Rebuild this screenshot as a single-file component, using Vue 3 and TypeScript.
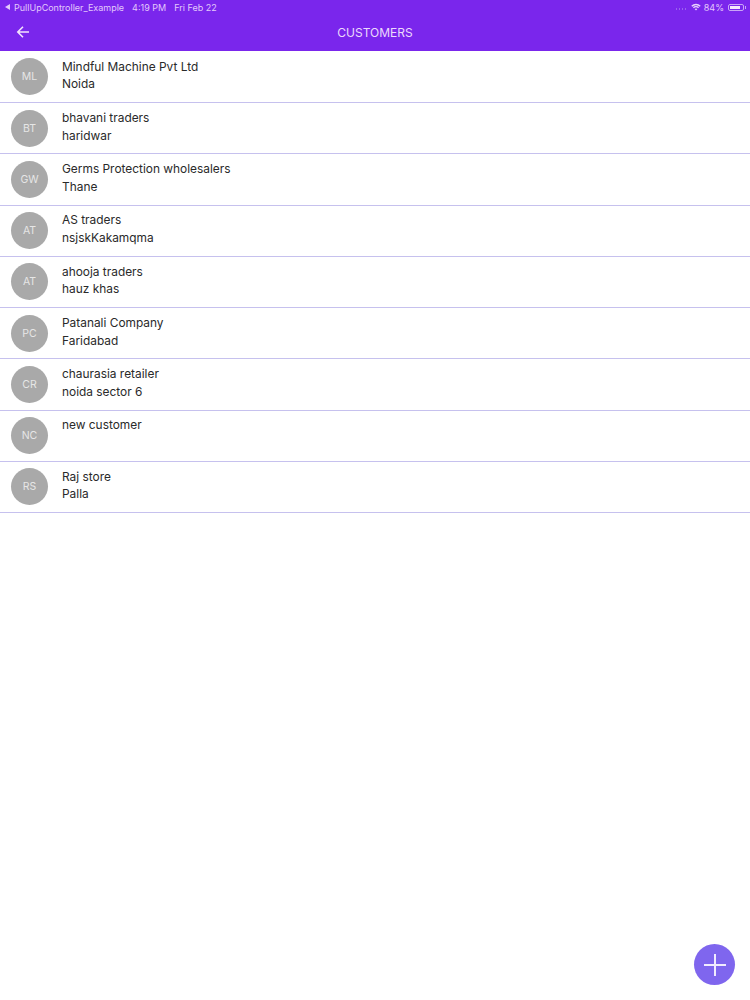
<script setup lang="ts">
interface Customer { initials: string; name: string; city: string }
const customers: Customer[] = [
  { initials: 'ML', name: 'Mindful Machine Pvt Ltd', city: 'Noida' },
  { initials: 'BT', name: 'bhavani traders', city: 'haridwar' },
  { initials: 'GW', name: 'Germs Protection wholesalers', city: 'Thane' },
  { initials: 'AT', name: 'AS traders', city: 'nsjskKakamqma' },
  { initials: 'AT', name: 'ahooja traders', city: 'hauz khas' },
  { initials: 'PC', name: 'Patanali Company', city: 'Faridabad' },
  { initials: 'CR', name: 'chaurasia retailer', city: 'noida sector 6' },
  { initials: 'NC', name: 'new customer', city: '' },
  { initials: 'RS', name: 'Raj store', city: 'Palla' },
]
</script>

<template>
  <div class="page">
    <header class="head">
      <div class="status">
        <div class="status-left">
          <span class="back-tri"></span>
          <span class="app">PullUpController_Example</span>
          <span class="time">4:19 PM</span>
          <span>Fri Feb 22</span>
        </div>
        <div class="status-right">
          <span class="signal"></span>
          <svg class="wifi" width="10" height="8" viewBox="0 0 11 8">
            <path d="M0.3 2.6A7.4 7.4 0 0 1 10.7 2.6L9.6 3.7A5.8 5.8 0 0 0 1.4 3.7Z" fill="#e9d5fb"/>
            <path d="M2.1 4.4A4.8 4.8 0 0 1 8.9 4.4L7.8 5.5A3.2 3.2 0 0 0 3.2 5.5Z" fill="#e9d5fb"/>
            <path d="M4 6.3A2.1 2.1 0 0 1 7 6.3L5.5 7.9Z" fill="#e9d5fb"/>
          </svg>
          <span class="pct">84%</span>
          <span class="battery"><span class="battery-fill"></span></span>
        </div>
      </div>
      <div class="bar">
        <svg class="arrow" width="14" height="14" viewBox="0 0 14 14" fill="none" stroke="#f3e3fd" stroke-width="1.6">
          <path d="M13 7H2M7 1.8 1.8 7 7 12.2"/>
        </svg>
        <span class="title">CUSTOMERS</span>
      </div>
    </header>
    <ul class="list">
      <li v-for="(c, i) in customers" :key="i" class="row">
        <div class="avatar">{{ c.initials }}</div>
        <div class="text">
          <div class="line">{{ c.name }}</div>
          <div class="line">{{ c.city }}</div>
        </div>
      </li>
    </ul>
    <button class="fab" aria-label="Add">
      <svg width="24" height="24" viewBox="0 0 24 24" stroke="#f1ecfe" stroke-width="2">
        <path d="M12 1V23M1 12H23"/>
      </svg>
    </button>
  </div>
</template>

<style>
html, body { margin: 0; background: #fff; }
</style>

<style scoped>
.page {
  position: relative;
  width: 750px;
  height: 1000px;
  overflow: hidden;
  background: #fff;
  font-family: Inter, "Liberation Sans", sans-serif;
}
.head { background: #7a26ec; height: 51px; }
.status {
  height: 14px;
  padding: 0 4px 0 5px;
  display: flex;
  justify-content: space-between;
  align-items: center;
  font-size: 9px;
  color: #e3c9fb;
}
.status-left { display: flex; align-items: center; }
.back-tri {
  width: 0; height: 0;
  border-top: 3px solid transparent;
  border-bottom: 3px solid transparent;
  border-right: 5px solid #e3c9fb;
  margin-right: 4px;
}
.time { margin: 0 8px; }
.status-right { display: flex; align-items: center; gap: 4px; }
.signal {
  width: 11px;
  height: 2px;
  margin-top: 3px;
  background: repeating-linear-gradient(90deg, #9a62ee 0 1.5px, transparent 1.5px 3px);
}
.pct { margin-left: -1px; }
.battery {
  position: relative;
  width: 16px; height: 7px;
  border: 1px solid #c9a4f6;
  border-radius: 2px;
  box-sizing: border-box;
  padding: 1px;
  margin-right: 2px;
  display: flex;
}
.battery::after {
  content: "";
  position: absolute;
  right: -3px;
  top: 1px;
  width: 1px;
  height: 3px;
  background: #c9a4f6;
}
.battery-fill { width: 84%; background: #f3e6fd; }
.bar {
  height: 37px;
  display: flex;
  align-items: center;
  justify-content: center;
  position: relative;
}
.arrow { position: absolute; left: 16px; top: 11px; }
.title { font-size: 12px; color: #ecd9fc; }
.list { list-style: none; margin: 0; padding: 0.75px 0 0; }
.row {
  height: 51.25px;
  box-sizing: border-box;
  border-bottom: 1.5px solid #c6c1ee;
  display: flex;
  align-items: center;
  padding-left: 11px;
}
.avatar {
  width: 37px; height: 37px;
  border-radius: 50%;
  background: #a9a9a9;
  color: #e6e6e6;
  font-size: 10.5px;
  display: flex;
  align-items: center;
  justify-content: center;
  flex: none;
}
.text { margin-left: 14px; margin-bottom: 3px; }
.line { height: 17.7px; line-height: 17.7px; font-size: 11.9px; color: #2a2a2a; }
.fab {
  position: absolute;
  left: 694px;
  top: 944px;
  width: 41px; height: 41px;
  border: none;
  padding: 0;
  border-radius: 50%;
  background: #7f66ee;
  display: flex;
  align-items: center;
  justify-content: center;
}
</style>
